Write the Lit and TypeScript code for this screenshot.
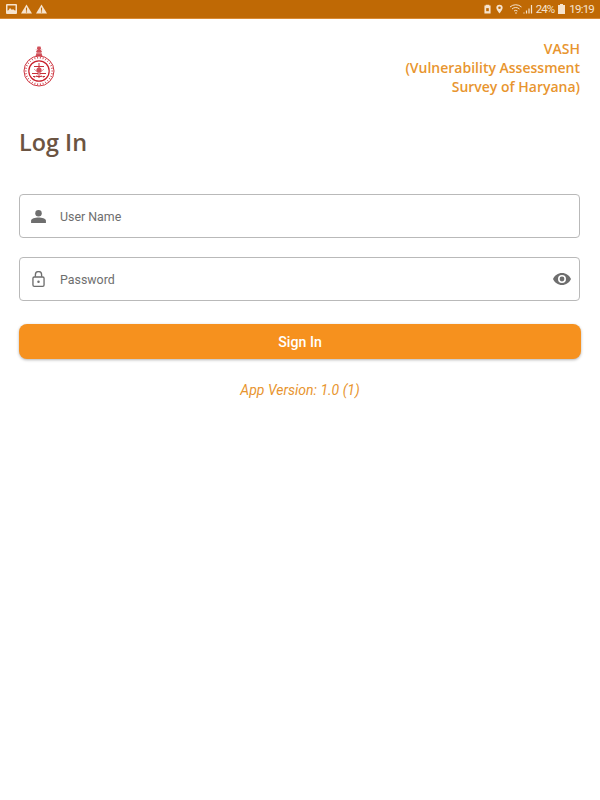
import { LitElement, html, css, svg } from "lit";
import { customElement } from "lit/decorators.js";

const ring = (n: number, r1: number, r2: number, w: number, c: string) =>
  Array.from({ length: n }, (_, i) => {
    const a = (i / n) * Math.PI * 2;
    return svg`<line x1=${16 + Math.cos(a) * r1} y1=${25 + Math.sin(a) * r1} x2=${16 + Math.cos(a) * r2} y2=${25 + Math.sin(a) * r2} stroke=${c} stroke-width=${w}/>`;
  });

@customElement("app-root")
export class AppRoot extends LitElement {
  static styles = css`
    :host { display: block; width: 600px; height: 800px; background: #fff; font-family: Roboto, sans-serif; overflow: hidden; }
    .status { height: 18px; background: #bf6905; display: flex; align-items: center; justify-content: space-between; padding: 0 6px; color: #f6e3cd; border-bottom: 1px solid #d98a35; }
    .status .left, .status .right { display: flex; align-items: center; }
    .status .left { gap: 4px; }
    .status .right { font-size: 11.5px; line-height: 18px; }
    .status svg { display: block; }
    .pin { margin-left: 5px; }
    .wifi { margin-left: 7px; }
    .pct { margin-left: 3px; letter-spacing: -0.9px; }
    .batt { margin-left: 4px; }
    .clock { margin-left: 4px; letter-spacing: -0.8px; }
    .main { padding: 0 20px; }
    .header { display: flex; justify-content: space-between; align-items: flex-start; padding-top: 20px; }
    .logo { margin: 7px 0 0 3px; display: block; }
    .org { font-family: "Open Sans", sans-serif; font-weight: 600; font-size: 14px; line-height: 19px; color: #e8952f; text-align: right; }
    h1 { margin: 0 0 0 -1px; padding-top: 30px; font-family: "Open Sans", sans-serif; font-weight: 600; font-size: 23.4px; line-height: 33px; color: #6b5442; }
    .fields { display: flex; flex-direction: column; gap: 19px; margin-top: 35px; margin-left: -1px; }
    .field { height: 42px; border: 1px solid #b9b9b9; border-radius: 4px; display: flex; align-items: center; color: #6e6e6e; font-size: 12.4px; background: #fff; }
    .field .icon { width: 37px; display: flex; justify-content: center; flex: none; }
    .field .label { flex: 1; margin-left: 3px; }
    .field .eye { margin-right: 8px; display: block; }
    .signin { display: flex; align-items: center; justify-content: center; height: 35px; margin: 23px -1px 0 -1px; padding-top: 1px; box-sizing: border-box; background: #f6911e; border-radius: 8px; color: #fff; font-weight: 500; font-size: 14.2px; box-shadow: 0 1px 3px rgba(0,0,0,.3); }
    .version { text-align: center; font-style: italic; font-size: 14px; line-height: 20px; color: #e8952f; margin-top: 21px; }
  `;

  render() {
    return html`
      <div class="status">
        <div class="left">
          <svg width="11" height="10" viewBox="0 0 11 10"><rect width="11" height="10" rx="1" fill="#f6e3cd"/><rect x="1.500" y="1.500" width="8" height="5" fill="#bf6905"/><path d="M2 7l2-3 2 2 1-1 2 2z" fill="#f6e3cd"/></svg>
          <svg width="11" height="10" viewBox="0 0 12 10"><path d="M6 0L12 10H0z" fill="#f6e3cd"/><rect x="5.400" y="3.500" width="1.200" height="3.400" fill="#bf6905"/><rect x="5.400" y="7.600" width="1.200" height="1.200" fill="#bf6905"/></svg>
          <svg width="11" height="10" viewBox="0 0 12 10"><path d="M6 0L12 10H0z" fill="#f6e3cd"/><rect x="5.400" y="3.500" width="1.200" height="3.400" fill="#bf6905"/><rect x="5.400" y="7.600" width="1.200" height="1.200" fill="#bf6905"/></svg>
        </div>
        <div class="right">
          <svg width="7" height="10" viewBox="0 0 8 10"><path d="M2 0h4v1h1.500v9H.5V1H2z" fill="#f6e3cd"/><rect x="2.500" y="4" width="3" height="3.500" fill="#bf6905"/></svg>
          <svg class="pin" width="7" height="10" viewBox="0 0 8 10"><path d="M4 0a3.600 3.600 0 0 1 3.600 3.600C7.600 6 4 10 4 10S.4 6 .4 3.600A3.600 3.600 0 0 1 4 0z" fill="#f6e3cd"/><circle cx="4" cy="3.600" r="1.500" fill="#bf6905"/></svg>
          <svg class="wifi" width="23" height="10" viewBox="0 0 23 10" fill="none" stroke="#f6e3cd" stroke-width="1"><path d="M0 3a8.500 8.500 0 0 1 11.500 0M2 5a5.500 5.500 0 0 1 7.500 0M4 7a2.800 2.800 0 0 1 3.500 0"/><circle cx="6" cy="9" r=".8" fill="#f6e3cd" stroke="none"/><path d="M14 9.500v-1M16.500 9.500v-3M19 9.500v-5M21.500 9.500V1" stroke-width="1.200"/></svg>
          <span class="pct">24%</span>
          <svg class="batt" width="7" height="10" viewBox="0 0 7 10"><path d="M2 0h3v1h2v9H0V1h2z" fill="#f6e3cd"/></svg>
          <span class="clock">19:19</span>
        </div>
      </div>
      <div class="main">
        <div class="header">
          <svg class="logo" width="32" height="41" viewBox="0 0 32 41" fill="none">
            <path d="M14.500 0.500h3l.6 2-.6 1 1.500 2-.8 1 1.300 3.500h-7l1.300-3.500-.8-1 1.500-2-.6-1z" fill="#d0505a"/>
            <path d="M12.500 3.500h2M17.500 3.500h2M14 7h4" stroke="#f3c6c9" stroke-width=".7"/>
            <circle cx="16" cy="25" r="15" stroke="#c8202c" stroke-width=".9"/>
            ${ring(30, 12.400, 14.200, .9, "#d0404a")}
            <circle cx="16" cy="25" r="10.200" stroke="#c8202c" stroke-width="1.200"/>
            <path d="M9 27.500h14M10 30.500h12M11 20.500h10M16 17v15" stroke="#c8303a" stroke-width="1"/>
            <path d="M11 23l10 9M21 23l-10 9" stroke="#e59aa0" stroke-width="1"/>
            <circle cx="16" cy="24" r="2.600" fill="#d0505a"/>
          </svg>
          <div class="org">VASH<br />(Vulnerability Assessment<br />Survey of Haryana)</div>
        </div>
        <h1>Log In</h1>
        <div class="fields">
          <div class="field">
            <div class="icon">
              <svg width="15" height="13" viewBox="0 0 16 14"><circle cx="8" cy="3.500" r="3.500" fill="#6e6e6e"/><path d="M0 14v-2.500C0 9 4.500 8 8 8s8 1 8 3.500V14z" fill="#6e6e6e"/></svg>
            </div>
            <div class="label">User Name</div>
          </div>
          <div class="field">
            <div class="icon">
              <svg width="13" height="16" viewBox="0 0 14 18" fill="none" stroke="#6e6e6e" stroke-width="1.500"><rect x=".75" y="6.750" width="12.500" height="10.500" rx="1.500"/><path d="M3.500 6.500V4.200a3.500 3.500 0 0 1 7 0v2.300"/><circle cx="7" cy="12" r="1.400" fill="#6e6e6e" stroke="none"/></svg>
            </div>
            <div class="label">Password</div>
            <svg class="eye" width="18" height="12" viewBox="0 0 18 12"><path fill-rule="evenodd" d="M9 0c4 0 7.400 2.500 9 6-1.600 3.500-5 6-9 6s-7.400-2.500-9-6c1.600-3.500 5-6 9-6zm0 2a4 4 0 1 0 0 8 4 4 0 0 0 0-8zm0 1.600a2.400 2.400 0 1 1 0 4.800 2.400 2.400 0 0 1 0-4.800z" fill="#6e6e6e"/></svg>
          </div>
        </div>
        <div class="signin">Sign In</div>
        <div class="version">App Version: 1.0 (1)</div>
      </div>
    `;
  }
}
